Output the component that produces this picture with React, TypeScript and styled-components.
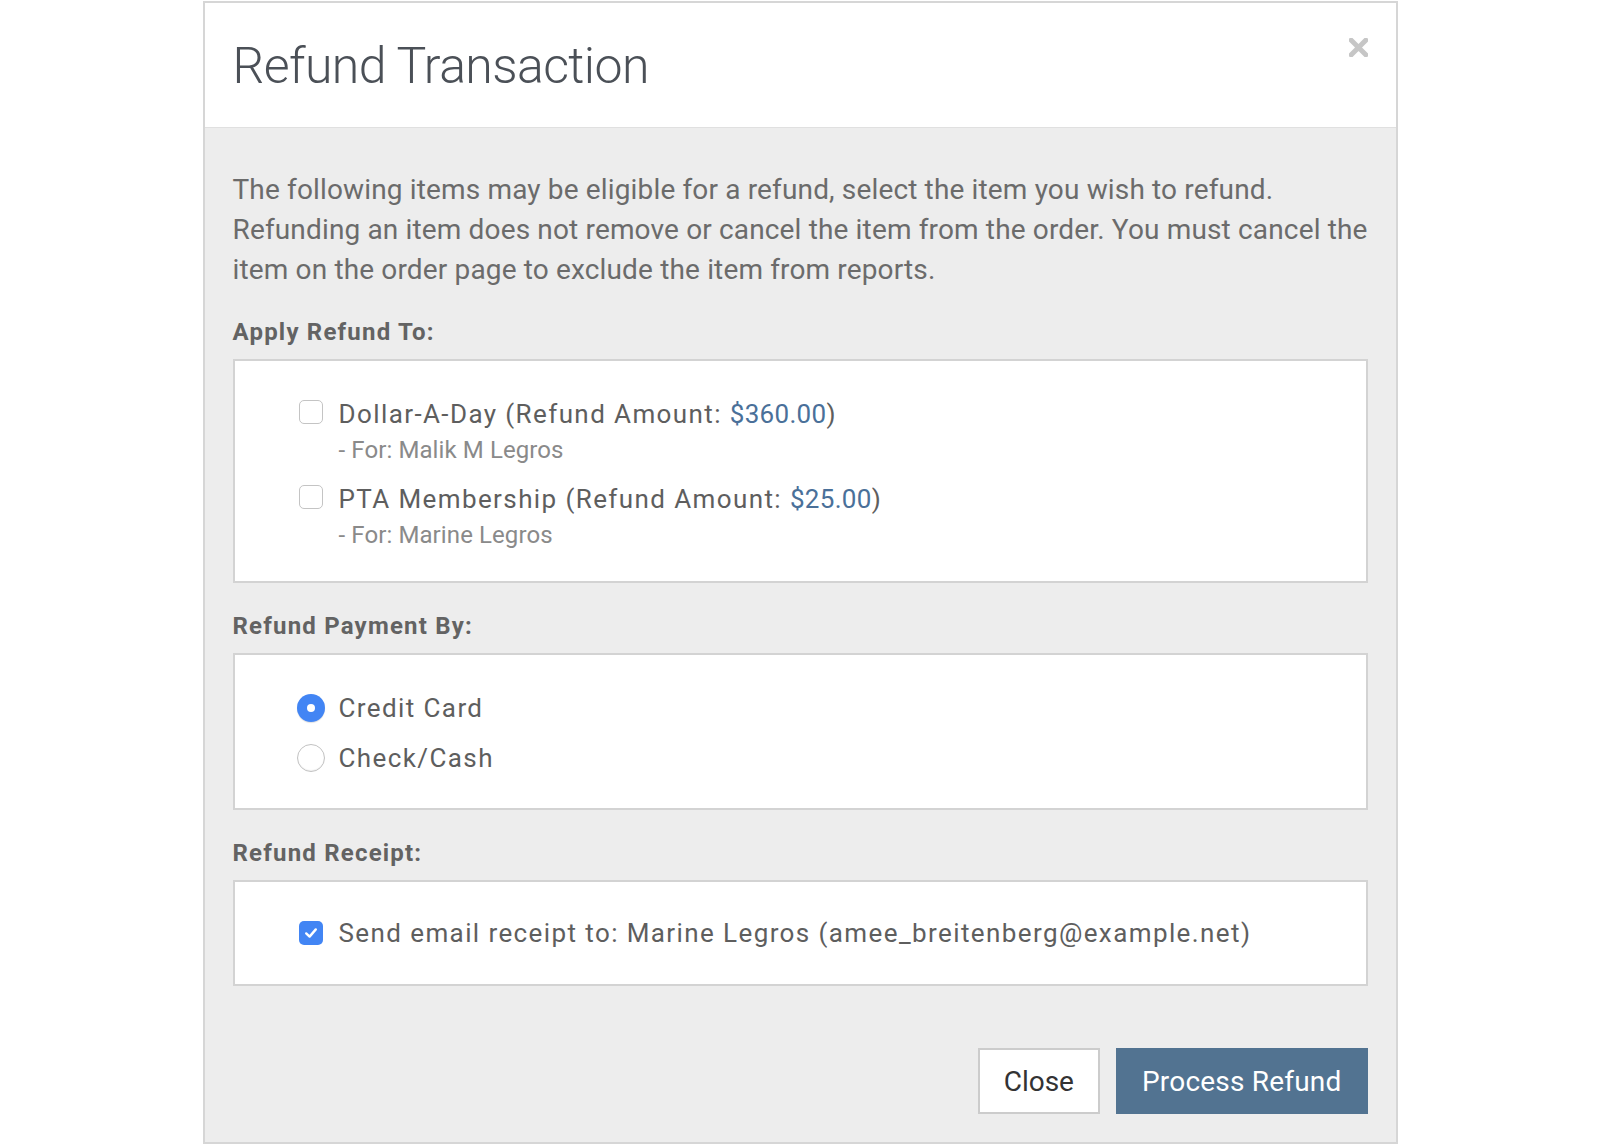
import React from 'react';
import styled, { createGlobalStyle } from 'styled-components';

const GlobalStyle = createGlobalStyle`
  html, body {
    margin: 0;
    padding: 0;
    background: #ffffff;
  }
  body {
    font-family: Roboto, "Noto Sans", "Liberation Sans", sans-serif;
    -webkit-font-smoothing: antialiased;
  }
  * {
    box-sizing: border-box;
  }
`;

const Modal = styled.div`
  width: 1195px;
  margin: 1px auto 0;
  border: 2px solid #d6d6d6;
  background: #ededed;
`;

const Header = styled.div`
  height: 125px;
  padding: 38px 28px 0 28px;
  background: #ffffff;
  border-bottom: 1px solid #e0e0e0;
  display: flex;
  justify-content: space-between;
  align-items: flex-start;
`;

const Title = styled.h1`
  margin: 0;
  font-size: 50px;
  line-height: 1;
  font-weight: 300;
  letter-spacing: -0.6px;
  color: #4b5057;
`;

const CloseIcon = styled.button`
  border: none;
  background: none;
  padding: 0;
  margin-top: -3px;
  width: 19px;
  height: 19px;
  cursor: pointer;
  display: flex;
`;

const Body = styled.div`
  padding: 42px 28px 28px 28px;
`;

const Intro = styled.p`
  margin: 0 -20px 0 0;
  font-size: 28px;
  line-height: 40px;
  letter-spacing: 0.15px;
  color: #6b6b6b;
`;

const SectionLabel = styled.div`
  margin: 27px 0 12px;
  font-size: 24px;
  line-height: 30px;
  font-weight: 700;
  letter-spacing: 1.2px;
  color: #636363;
`;

const OptionBox = styled.div<{ $pt: number; $pb: number; $gap: number }>`
  background: #ffffff;
  border: 2px solid #d3d3d3;
  padding: ${({ $pt, $pb }) => `${$pt}px 0 ${$pb}px 62px`};
  display: flex;
  flex-direction: column;
  gap: ${({ $gap }) => $gap}px;

  & + ${SectionLabel} {
    margin-top: 28px;
  }
`;

const ItemRow = styled.label<{ $center?: boolean }>`
  display: flex;
  align-items: ${({ $center }) => ($center ? 'center' : 'flex-start')};
  gap: 14px;
  cursor: pointer;
`;

const Control = styled.span`
  width: 28px;
  height: 28px;
  flex: none;
  display: flex;
  align-items: center;
  justify-content: center;
`;

const Checkbox = styled.span<{ $checked?: boolean }>`
  width: 24px;
  height: 24px;
  border-radius: 5px;
  display: flex;
  align-items: center;
  justify-content: center;
  background: ${({ $checked }) => ($checked ? '#4285f4' : '#ffffff')};
  border: ${({ $checked }) => ($checked ? 'none' : '1.5px solid #c4c4c4')};
`;

const Radio = styled.span<{ $checked?: boolean }>`
  width: 28px;
  height: 28px;
  border-radius: 50%;
  display: flex;
  align-items: center;
  justify-content: center;
  background: ${({ $checked }) => ($checked ? '#4285f4' : '#ffffff')};
  border: ${({ $checked }) => ($checked ? 'none' : '1.5px solid #c2c2c2')};
  box-shadow: ${({ $checked }) =>
    $checked ? '0 1px 1px rgba(0, 0, 0, 0.12)' : 'inset 0 -1px 1px rgba(0, 0, 0, 0.06)'};

  &::after {
    content: '';
    display: ${({ $checked }) => ($checked ? 'block' : 'none')};
    width: 8px;
    height: 8px;
    border-radius: 50%;
    background: #ffffff;
  }
`;

const ItemText = styled.div`
  display: flex;
  flex-direction: column;
  gap: 5px;
`;

const ItemTitle = styled.span<{ $lh: number }>`
  font-size: 26px;
  line-height: ${({ $lh }) => $lh}px;
  letter-spacing: 1.4px;
  color: #5e5e5e;
  white-space: nowrap;
`;

const Amount = styled.span`
  color: #4a7099;
  letter-spacing: 0.3px;
`;

const ItemFor = styled.span`
  font-size: 24px;
  line-height: 30px;
  letter-spacing: 0.1px;
  color: #8a8a8a;
`;

const Footer = styled.div`
  margin-top: 62px;
  display: flex;
  justify-content: flex-end;
  gap: 16px;
`;

const Button = styled.button<{ $primary?: boolean }>`
  height: 66px;
  padding: 0 24px;
  font-family: Roboto, "Noto Sans", "Liberation Sans", sans-serif;
  font-size: 28px;
  letter-spacing: ${({ $primary }) => ($primary ? '0.2px' : '0')};
  cursor: pointer;
  background: ${({ $primary }) => ($primary ? '#527391' : '#ffffff')};
  color: ${({ $primary }) => ($primary ? '#ffffff' : '#333333')};
  border: 2px solid ${({ $primary }) => ($primary ? '#527391' : '#cccccc')};
  border-radius: 0;
`;

const CheckMark = () => (
  <svg width="16" height="16" viewBox="0 0 16 16">
    <path d="M3.2 8.4 L6.6 11.6 L12.8 4.4" fill="none" stroke="#ffffff" strokeWidth="2.4" strokeLinecap="round" strokeLinejoin="round" />
  </svg>
);

const items = [
  { name: 'Dollar-A-Day', amount: '$360.00', person: 'Malik M Legros' },
  { name: 'PTA Membership', amount: '$25.00', person: 'Marine Legros' },
];

const App: React.FC = () => {
  return (
    <>
      <GlobalStyle />
      <Modal>
        <Header>
          <Title>Refund Transaction</Title>
          <CloseIcon aria-label="Close">
            <svg width="19" height="19" viewBox="0 0 19 19">
              <path d="M2.2 2.2 L16.8 16.8 M16.8 2.2 L2.2 16.8" stroke="#c6c6c6" strokeWidth="5" strokeLinecap="square" />
            </svg>
          </CloseIcon>
        </Header>

        <Body>
          <Intro>
            The following items may be eligible for a refund, select the item you wish to refund.
            Refunding an item does not remove or cancel the item from the order. You must cancel the
            item on the order page to exclude the item from reports.
          </Intro>

          <SectionLabel>Apply Refund To:</SectionLabel>
          <OptionBox $pt={37} $pb={31} $gap={18}>
            {items.map((item) => (
              <ItemRow key={item.name}>
                <Control>
                  <Checkbox />
                </Control>
                <ItemText>
                  <ItemTitle $lh={32}>
                    {item.name} (Refund Amount: <Amount>{item.amount}</Amount>)
                  </ItemTitle>
                  <ItemFor>- For: {item.person}</ItemFor>
                </ItemText>
              </ItemRow>
            ))}
          </OptionBox>

          <SectionLabel>Refund Payment By:</SectionLabel>
          <OptionBox $pt={39} $pb={36} $gap={22}>
            <ItemRow $center>
              <Control>
                <Radio $checked />
              </Control>
              <ItemTitle $lh={28}>Credit Card</ItemTitle>
            </ItemRow>
            <ItemRow $center>
              <Control>
                <Radio />
              </Control>
              <ItemTitle $lh={28}>Check/Cash</ItemTitle>
            </ItemRow>
          </OptionBox>

          <SectionLabel>Refund Receipt:</SectionLabel>
          <OptionBox $pt={37} $pb={37} $gap={0}>
            <ItemRow $center>
              <Control>
                <Checkbox $checked>
                  <CheckMark />
                </Checkbox>
              </Control>
              <ItemTitle $lh={28}>
                Send email receipt to: Marine Legros (amee_breitenberg@example.net)
              </ItemTitle>
            </ItemRow>
          </OptionBox>

          <Footer>
            <Button>Close</Button>
            <Button $primary>Process Refund</Button>
          </Footer>
        </Body>
      </Modal>
    </>
  );
};

export default App;
